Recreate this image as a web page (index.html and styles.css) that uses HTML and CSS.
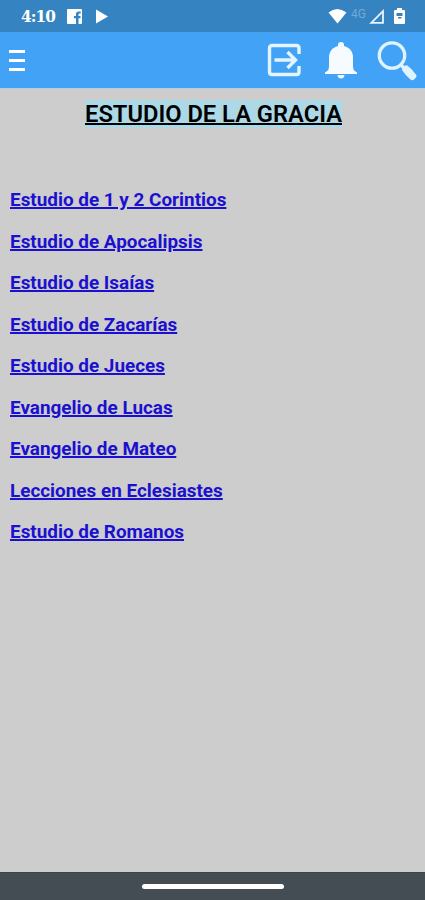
FILE: index.html
```html
<!DOCTYPE html>
<html lang="es">
<head>
    <meta charset="UTF-8">
    <meta name="viewport" content="width=device-width, initial-scale=1.0">
    <title>Estudio de la Gracia</title>
    <link rel="stylesheet" href="styles.css">
</head>
<body>

    <div class="status-bar">
        <span class="time">4:10</span>
        <svg class="facebook" width="15" height="15" viewBox="0 0 15 15">
            <path fill="#fff" d="M1 0h13a1 1 0 0 1 1 1v13a1 1 0 0 1-1 1h-2.500V9.300h2V7h-2V5.500q0-1 1-1h1.200V2.400h-1.800Q9 2.400 9 5v2H7v2.300h2V15H1a1 1 0 0 1-1-1V1a1 1 0 0 1 1-1z"/>
        </svg>
        <svg class="play" width="12" height="15" viewBox="0 0 12 15">
            <path fill="#fff" d="M0 0.500L12 7.500L0 14.500z"/>
        </svg>
        <div class="status-right">
            <svg width="19" height="16" viewBox="0 0 19 16">
                <path fill="#fff" d="M0.500 4.500Q9 -2.500 18.500 4.500L9.500 15.500z"/>
            </svg>
            <span class="network">4G</span>
            <svg class="signal" width="16" height="15" viewBox="0 0 16 15">
                <path fill="none" stroke="#e8f4ff" stroke-width="1.800" d="M2.300 13.800L14 2.200V13.800z"/>
            </svg>
            <svg class="battery" width="11" height="16" viewBox="0 0 11 16">
                <path fill="#fff" d="M3 0h5v2h2q1 0 1 1v12q0 1-1 1H1q-1 0-1-1V3q0-1 1-1h2z"/>
                <path fill="#3d80b5" d="M2.500 5h6v3h-6zM4 9h3.500v1.500H4z"/>
            </svg>
        </div>
    </div>

    <header class="toolbar">
        <button class="menu" aria-label="Menú">
            <span></span>
            <span></span>
            <span></span>
        </button>
        <div class="actions">
            <svg width="34" height="34" viewBox="0 0 34 34" fill="none" stroke="#e4f4ff" stroke-width="3.400">
                <path d="M32 11V5q0-2.500-2.500-2.500H5Q2.500 2.500 2.500 5v24q0 2.500 2.500 2.500H29.500q2.500 0 2.500-2.500v-6"/>
                <path d="M7.500 17h21M20.500 9l8 8-8 8"/>
            </svg>
            <svg class="bell" width="32" height="37" viewBox="0 0 32 37">
                <path fill="#f5fbff" d="M13 4V3a3 3 0 0 1 6 0v1c6 1.500 9 6 9 11v10q0 3 2.500 4.500l1.500 1V32H0v-1.500l1.500-1Q4 28 4 25V15C4 10 7 5.500 13 4zM12.500 33h7Q19 36.500 16 36.500T12.500 33z"/>
            </svg>
            <svg class="search" width="40" height="40" viewBox="0 0 40 40">
                <circle cx="15" cy="14.500" r="12.700" fill="none" stroke="#e0f3ff" stroke-width="3.300"/>
                <path stroke="#e0f3ff" stroke-width="3.500" d="M23.500 23.500l4 4"/>
                <path fill="#e0f3ff" d="M25 29Q25 25 30 24.300Q35 28 38.500 33q2 2 0 4l-1.500 1.500q-1.500 1.500-3.500 0Q28.500 34.500 25 29z"/>
            </svg>
        </div>
    </header>

    <main class="content">
        <h1><span>ESTUDIO DE LA GRACIA</span></h1>
        <ul class="studies">
            <li><a href="#">Estudio de 1 y 2 Corintios</a></li>
            <li><a href="#">Estudio de Apocalipsis</a></li>
            <li><a href="#">Estudio de Isaías</a></li>
            <li><a href="#">Estudio de Zacarías</a></li>
            <li><a href="#">Estudio de Jueces</a></li>
            <li><a href="#">Evangelio de Lucas</a></li>
            <li><a href="#">Evangelio de Mateo</a></li>
            <li><a href="#">Lecciones en Eclesiastes</a></li>
            <li><a href="#">Estudio de Romanos</a></li>
        </ul>
    </main>

    <div class="nav-bar">
        <div class="handle"></div>
    </div>

</body>
</html>
```
FILE: styles.css
```css
* {
    box-sizing: border-box;
}

body {
    margin: 0;
    height: 900px;
    display: flex;
    flex-direction: column;
    font-family: Roboto, sans-serif;
    background-color: #cdcdcd;
}

.status-bar {
    display: flex;
    align-items: center;
    height: 32px;
    padding: 0 20px 0 21px;
    background-color: #3683c1;
    color: #fff;
}

.time {
    width: 46px;
    font: bold 17px "DejaVu Serif Condensed", "DejaVu Serif", serif;
    letter-spacing: -0.9px;
}

.play {
    margin-left: 14px;
}

.status-right {
    display: flex;
    align-items: center;
    margin-left: auto;
}

.network {
    margin-left: 4px;
    width: 18px;
    font-size: 12px;
    line-height: 12px;
    margin-top: -5px;
    color: #6fa9d8;
}

.battery {
    margin-left: 9px;
}

.toolbar {
    display: flex;
    align-items: center;
    justify-content: space-between;
    height: 56px;
    padding: 0 8px 0 9px;
    background-color: #42a3f6;
}

.menu {
    display: flex;
    flex-direction: column;
    gap: 6px;
    padding: 1px 0 0;
    border: none;
    background: none;
}

.menu span {
    width: 16px;
    height: 3px;
    background-color: #fff;
}

.actions {
    display: flex;
    align-items: center;
}

.bell {
    margin-left: 24px;
}

.search {
    margin-left: 20px;
    margin-top: 1px;
}

.content {
    flex: 1;
    padding: 12px 10px 0;
    border-top: 1px solid #b9cbd9;
}

h1 {
    margin: 0 0 0 2px;
    font-size: 23.7px;
    line-height: 27px;
    font-weight: 600;
    text-align: center;
    text-decoration: underline;
    text-decoration-thickness: 2px;
}

h1 span {
    background-color: #add8e6;
}

.studies {
    list-style: none;
    margin: 61px 0 0;
    padding: 0;
}

.studies li {
    height: 41.5px;
    font-size: 18.9px;
    line-height: 22px;
    font-weight: bold;
}

.studies a {
    color: #1b10cf;
    text-decoration-thickness: 2px;
}

.nav-bar {
    display: flex;
    justify-content: center;
    height: 28px;
    padding-top: 11px;
    background-color: #444d54;
    border-top: 1px solid #3c4648;
}

.handle {
    width: 142px;
    height: 5px;
    border-radius: 2.5px;
    background-color: #fff;
}
```
